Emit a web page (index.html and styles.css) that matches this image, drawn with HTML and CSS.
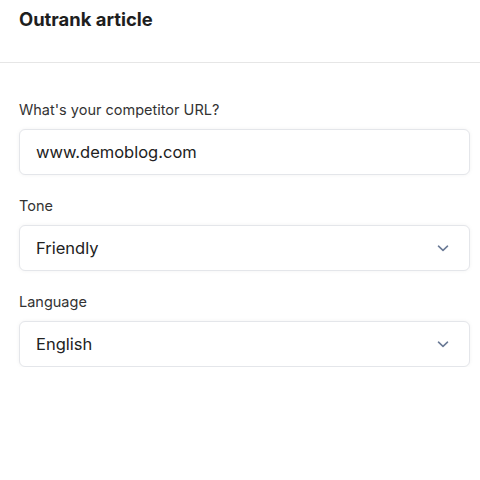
FILE: index.html
```html
<!DOCTYPE html>
<html>
<head>
<meta charset="utf-8">
<link rel="stylesheet" href="styles.css">
</head>
<body>
<header class="header">
  <h1 class="title">Outrank article</h1>
</header>
<main class="form">
  <div class="field">
    <label class="label">What's your competitor URL?</label>
    <div class="box"><span class="value">www.demoblog.com</span></div>
  </div>
  <div class="field">
    <label class="label">Tone</label>
    <div class="box select"><span class="value">Friendly</span>
      <svg class="chev" width="12" height="7" viewBox="0 0 12 7"><path d="M1.5 1.2 L6 5.3 L10.5 1.2" fill="none" stroke="#6a7a96" stroke-width="1.6" stroke-linecap="round" stroke-linejoin="round"/></svg>
    </div>
  </div>
  <div class="field">
    <label class="label">Language</label>
    <div class="box select"><span class="value">English</span>
      <svg class="chev" width="12" height="7" viewBox="0 0 12 7"><path d="M1.5 1.2 L6 5.3 L10.5 1.2" fill="none" stroke="#6a7a96" stroke-width="1.6" stroke-linecap="round" stroke-linejoin="round"/></svg>
    </div>
  </div>
</main>
</body>
</html>
```
FILE: styles.css
```css
html, body {
  margin: 0;
  padding: 0;
  background: #ffffff;
}
body {
  font-family: Inter, "Noto Sans", sans-serif;
  color: #222;
}
.header {
  height: 63px;
  border-bottom: 1px solid #e6e6e6;
  padding: 0 19px;
  box-sizing: border-box;
}
.title {
  margin: 0;
  padding-top: 8px;
  font-size: 18.4px;
  line-height: 22px;
  font-weight: 700;
  color: #1e1e1e;
}
.form {
  padding: 37px 10px 0 19px;
  display: flex;
  flex-direction: column;
  gap: 21px;
}
.field {
  display: flex;
  flex-direction: column;
  gap: 9px;
}
.label {
  font-size: 14.5px;
  line-height: 20px;
  color: #333;
}
.box {
  height: 46px;
  box-sizing: border-box;
  border: 1px solid #e4e6ea;
  border-radius: 6px;
  box-shadow: 0 0 4px rgba(0, 0, 0, 0.05);
  display: flex;
  align-items: center;
  padding: 0 20px 0 16px;
  background: #fff;
}
.value {
  font-size: 16.5px;
  color: #222;
  flex: 1;
}
.chev {
  display: block;
}
```
